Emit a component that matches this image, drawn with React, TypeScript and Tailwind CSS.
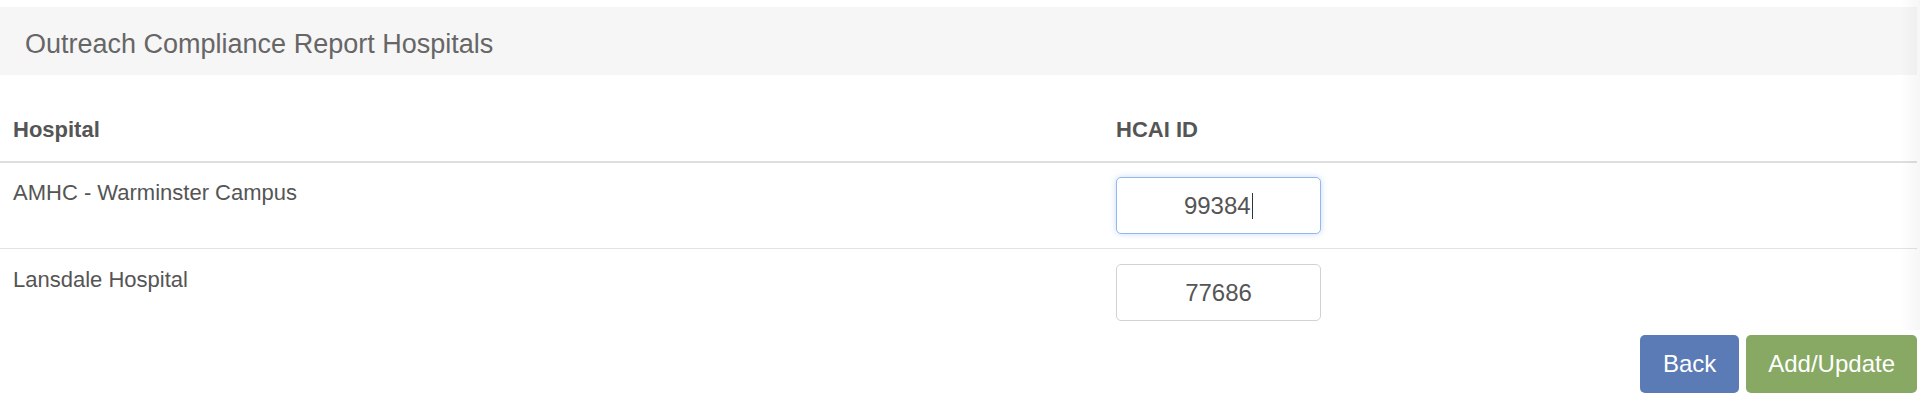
import React from "react";

const hospitals = [
  { name: "AMHC - Warminster Campus", hcai: "99384", focused: true },
  { name: "Lansdale Hospital", hcai: "77686", focused: false },
];

export default function App() {
  return (
    <div
      className="relative w-[1920px] h-[400px] bg-white pt-[7px] pr-[3px] text-[#555]"
      style={{ fontFamily: '"Liberation Sans", Arial, Helvetica, sans-serif' }}
    >
      {/* Panel heading */}
      <div className="h-[68px] bg-[#f6f6f6] flex items-center pl-[25px] pt-[5px]">
        <h2 className="text-[27px] leading-[32px] text-[#666]">
          Outreach Compliance Report Hospitals
        </h2>
      </div>

      {/* Table */}
      <div className="mt-[24px]">
        <div className="grid grid-cols-[1104px_1fr] border-b-2 border-[#dedede]">
          <div className="pl-[13px] py-[18px] text-[22px] leading-[26px] font-bold">
            Hospital
          </div>
          <div className="pl-[12px] py-[18px] text-[22px] leading-[26px] font-bold">
            HCAI ID
          </div>
        </div>

        {hospitals.map((h, i) => (
          <div
            key={h.name}
            className={
              i === 0
                ? "grid grid-cols-[1104px_1fr] items-start pt-[14px] pb-[14px] border-b border-[#e3e3e3]"
                : "grid grid-cols-[1104px_1fr] items-start pt-[15px] pb-[14px]"
            }
          >
            <div className="pl-[13px] mt-[3px] text-[22px] leading-[26px]">
              {h.name}
            </div>
            <div className="pl-[12px]">
              <div
                className={
                  h.focused
                    ? "w-[205px] h-[57px] rounded-[5px] border border-[#93b8ec] shadow-[0_0_6px_rgba(102,155,233,0.35)] flex items-center justify-center text-[24px] text-[#555] bg-white"
                    : "w-[205px] h-[57px] rounded-[5px] border border-[#d2d2d2] flex items-center justify-center text-[24px] text-[#555] bg-white"
                }
              >
                <span>{h.hcai}</span>
                {h.focused && (
                  <span className="inline-block w-[1.5px] h-[26px] bg-[#333] ml-[1px]" />
                )}
              </div>
            </div>
          </div>
        ))}
      </div>

      {/* Actions */}
      <div className="flex justify-end gap-[7px]">
        <button className="h-[58px] px-[23px] rounded-[5px] bg-[#5a7bb5] text-white text-[24px]">
          Back
        </button>
        <button className="h-[58px] px-[22px] rounded-[5px] bg-[#87a963] text-white text-[24px]">
          Add/Update
        </button>
      </div>

      {/* right-edge scroll shadow */}
      <div className="absolute top-0 right-0 w-[20px] h-[330px] bg-gradient-to-r from-transparent to-[rgba(0,0,0,0.035)] pointer-events-none" />
    </div>
  );
}
